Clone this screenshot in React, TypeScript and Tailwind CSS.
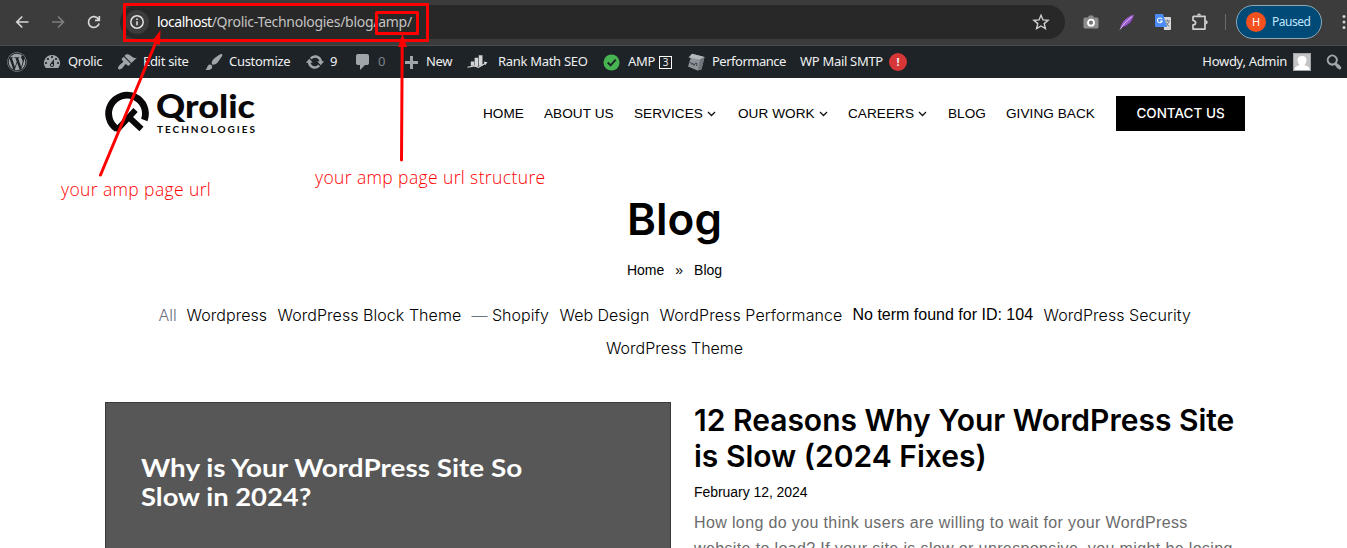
import type { ReactNode } from "react";
import { FaWordpress } from "react-icons/fa";

const dash: Record<string, string> = {
  dashboard:
    "M3.76 16h12.48A7.998 7.998 0 0 0 10 3a7.998 7.998 0 0 0-6.24 13zM10 4c.55 0 1 .45 1 1s-.45 1-1 1-1-.45-1-1 .45-1 1-1zM6 6c.55 0 1 .45 1 1s-.45 1-1 1-1-.45-1-1 .45-1 1-1zm8 0c.55 0 1 .45 1 1s-.45 1-1 1-1-.45-1-1 .45-1 1-1zm-5.37 5.55L12 7v6c0 1.1-.9 2-2 2s-2-.9-2-2c0-.57.24-1.08.63-1.45zM4 10c.55 0 1 .45 1 1s-.45 1-1 1-1-.45-1-1 .45-1 1-1zm12 0c.55 0 1 .45 1 1s-.45 1-1 1-1-.45-1-1 .45-1 1-1zm-5 3c0-.55-.45-1-1-1s-1 .45-1 1 .45 1 1 1 1-.45 1-1z",
  brush:
    "M14.48 11.06L7.41 3.99l1.5-1.5c.5-.56 2.3-.47 3.51.32 1.21.8 1.43 1.28 2.91 2.1 1.18.64 2.45 1.26 4.45.85zm-.71.71L6.7 4.7 4.93 6.47c-.39.39-.39 1.02 0 1.41l1.06 1.06c.39.39.39 1.03 0 1.42-.6.6-1.43 1.11-2.21 1.69-.35.26-.7.53-1.01.84C1.43 14.23.4 16.08 1.4 17.07c.99 1 2.84-.03 4.18-1.36.31-.31.58-.66.85-1.02.57-.78 1.08-1.61 1.69-2.21.39-.39 1.02-.39 1.41 0l1.06 1.06c.39.39 1.02.39 1.41 0z",
  customizer:
    "M18.33 3.57s.27-.8-.31-1.36c-.53-.52-1.22-.24-1.22-.24-.61.3-5.76 3.47-7.67 5.57-.86.96-2.06 3.79-1.09 4.82.92.98 3.96-.17 4.79-1 2.06-2.06 5.21-7.17 5.5-7.79zM1.4 17.65c2.37-1.56 1.46-3.41 3.23-4.64.93-.65 2.22-.62 3.08.29.63.67.8 2.57-.16 3.46-1.57 1.45-4 1.55-6.15.89z",
  update:
    "M10.2 3.28c3.53 0 6.43 2.61 6.92 6h2.08l-3.5 4-3.5-4h2.32c-.45-1.97-2.21-3.45-4.32-3.45-1.45 0-2.73.71-3.54 1.78L4.95 5.66C6.23 4.2 8.11 3.28 10.2 3.28zm-.4 13.44c-3.52 0-6.43-2.61-6.92-6H.8l3.5-4c1.17 1.33 2.33 2.67 3.5 4H5.48c.45 1.97 2.21 3.45 4.32 3.45 1.45 0 2.73-.71 3.54-1.78l1.71 1.95c-1.28 1.46-3.15 2.38-5.25 2.38z",
  comments:
    "M5 2h9q.82 0 1.41.59T16 4v7q0 .82-.59 1.41T14 13h-2l-5 5v-5H5q-.82 0-1.41-.59T3 11V4q0-.82.59-1.41T5 2z",
  plus: "M17 7v3h-5v5H9v-5H4V7h5V2h3v5h5z",
  search:
    "M12.14 4.18a5.504 5.504 0 0 1 .72 6.89c.12.1.22.21.36.31.2.16.47.36.81.59.34.24.56.39.66.47.42.31.73.57.94.78.32.32.6.65.84 1 .25.35.44.69.59 1.04.14.35.21.68.18 1-.02.32-.14.59-.36.81s-.49.34-.81.36c-.31.02-.65-.04-.99-.19-.35-.14-.7-.34-1.04-.59-.35-.24-.68-.52-1-.84-.21-.21-.47-.52-.77-.93-.1-.13-.25-.35-.47-.66-.22-.32-.4-.57-.56-.78-.16-.2-.29-.35-.44-.5a5.503 5.503 0 0 1-6.44-.98c-2.14-2.15-2.14-5.64 0-7.78a5.498 5.498 0 0 1 7.78 0zm-1.41 6.36a3.513 3.513 0 0 0 0-4.95 3.495 3.495 0 0 0-4.95 0 3.495 3.495 0 0 0 0 4.95c1.36 1.37 3.58 1.37 4.95 0z",
};

function Dash({ name }: { name: string }) {
  return (
    <svg viewBox="0 0 20 20" className="h-5 w-5 shrink-0 text-[#a0a5aa]" fill="currentColor">
      <path d={dash[name]} />
    </svg>
  );
}

function Slot({ w, children }: { w: string; children: ReactNode }) {
  return <div className={`flex h-full shrink-0 items-center whitespace-nowrap ${w}`}>{children}</div>;
}

function BrowserBar() {
  return (
    <div className="flex h-[46px] items-start border-b border-[#4b4b4b] bg-[#3c3c3c] font-['Noto_Sans','Open_Sans',sans-serif]">
      <div className="flex h-11 w-[120px] shrink-0 items-center pl-[15px]">
        <svg viewBox="0 0 90 20" className="h-5 w-[90px]" fill="none" strokeWidth="1.7">
          <path d="M13.5 10H2M7.3 4.5 1.8 10l5.5 5.5" stroke="#d6d6d6" />
          <path d="M37 10h11.500M43 4.500 48.500 10 43 15.500" stroke="#7d7d7d" />
          <path d="M83.500 7.200A5.400 5.400 0 1 0 84.100 11.500M84.300 4v4.300H80" stroke="#d6d6d6" />
        </svg>
      </div>
      <div className="mt-[5px] flex h-[34px] w-[945px] shrink-0 items-center rounded-full bg-[#282828]">
        <div className="ml-[5px] flex h-6 w-6 items-center justify-center rounded-full bg-[#3c3c3c]">
          <svg viewBox="0 0 16 16" className="h-4 w-4" fill="none" stroke="#e3e3e3" strokeWidth="1.5">
            <circle cx="8" cy="8" r="6.200" />
            <path d="M8 7.200v4M8 4.500V6" />
          </svg>
        </div>
        <div className="ml-2 w-[860px] pb-px text-[14px] tracking-[-0.28px] text-[#c3c3c3]">
          <span className="tracking-[-0.5px] text-white">localhost</span>/Qrolic-Technologies/blog/amp/
        </div>
        <svg viewBox="0 0 18 18" className="ml-[15px] h-[18px] w-[18px]" fill="none" stroke="#d0d0d0" strokeWidth="1.400">
          <path d="m9 2.200 2 4.700 5.100.4-3.900 3.300 1.200 5L9 13l-4.400 2.600 1.200-5L1.900 7.300 7 6.900z" />
        </svg>
      </div>
      <div className="flex h-11 flex-1 items-center">
        <svg viewBox="0 0 16 14" className="ml-[18px] h-[14px] w-4 shrink-0">
          <path d="M2 2.500h3L6 .5h4l1 2h3q1.500 0 1.500 1.500v8q0 1.500-1.500 1.500H2Q.5 13.500.5 12V4Q.5 2.500 2 2.500z" fill="#8d8d8d" />
          <circle cx="8" cy="7.700" r="3" fill="#777" stroke="#fff" strokeWidth="1.800" />
        </svg>
        <svg viewBox="0 0 16 16" className="ml-5 h-4 w-4 shrink-0">
          <path d="M1.500 15C1 10 6 3.500 14.800.5 14.500 6.500 9.500 12 3 13.200z" fill="#9a5cc9" />
          <path d="M1 15.500Q5 8.500 13 2.500" stroke="#e3c9f5" strokeWidth=".9" fill="none" />
          <path d="M4 13.200Q11 11 14 4" stroke="#5f2c83" strokeWidth=".9" fill="none" />
        </svg>
        <svg viewBox="0 0 16 16" className="ml-5 h-4 w-4 shrink-0">
          <path d="M8 3h7q1 0 1 1v11q0 1-1 1H9z" fill="#d8d8d8" />
          <path d="M10 7h5M12.500 5.500V7M11 12.500l3-5M11 8.500l3 4" stroke="#6f7c89" strokeWidth="1" fill="none" />
          <path d="M1 0h7l4 13H1q-1 0-1-1V1q0-1 1-1z" fill="#4b8bf5" />
          <path d="M7 5.200A2.400 2.400 0 1 0 7.200 7H5" stroke="#fff" strokeWidth="1.100" fill="none" />
        </svg>
        <svg viewBox="0 0 18 18" className="ml-5 h-[18px] w-[18px] shrink-0" fill="none" stroke="#d0d0d0" strokeWidth="1.700" strokeLinejoin="round">
          <path d="M2 3.300h12v4.300M14 10.800v5.300H2v-4.200q2.600-.2 2.600-2.200T2 7.500V3.300" />
          <path d="M14 7v4.500" />
          <path d="M6 2.600a2 2 0 0 1 4 0zM14.700 7.200a2 2 0 0 1 0 4z" fill="#d0d0d0" stroke="none" />
        </svg>
        <div className="ml-[16px] h-4 w-px shrink-0 bg-[#6b6b6b]" />
        <div className="ml-[10px] flex h-[34px] w-[86px] shrink-0 items-center rounded-full border border-[#8fa9b6] bg-[#004a77] pl-[9px]">
          <div className="flex h-5 w-5 items-center justify-center rounded-full bg-[#f4511e] text-[11px] text-white">H</div>
          <span className="ml-[6px] text-[12px] tracking-[-0.5px] text-[#c2e7ff]">Paused</span>
        </div>
        <svg viewBox="0 0 4 16" className="ml-5 h-4 w-1 shrink-0" fill="#d0d0d0">
          <circle cx="2" cy="2.500" r="1.500" />
          <circle cx="2" cy="8" r="1.500" />
          <circle cx="2" cy="13.500" r="1.500" />
        </svg>
      </div>
    </div>
  );
}

function AdminBar() {
  return (
    <div className="flex h-8 items-center bg-[#1d2327] pl-[7px] font-['Noto_Sans','Open_Sans',sans-serif] text-[13px] tracking-[-0.3px] text-[#f0f0f1]">
      <Slot w="w-[35px]"><FaWordpress className="h-5 w-5 text-[#a0a5aa]" /></Slot>
      <Slot w="w-[75px] gap-[6px]"><Dash name="dashboard" />Qrolic</Slot>
      <Slot w="w-[87px] gap-[6px]"><Dash name="brush" />Edit site</Slot>
      <Slot w="w-[101px] gap-[5px]"><Dash name="customizer" />Customize</Slot>
      <Slot w="w-[48px] gap-[5px]"><Dash name="update" />9</Slot>
      <Slot w="w-[48px] gap-[5px]"><Dash name="comments" /><span className="text-[#7d8287]">0</span></Slot>
      <Slot w="w-[66px] gap-[5px]"><span className="flex translate-y-[2px]"><Dash name="plus" /></span>New</Slot>
      <Slot w="w-[136px] gap-[10px]">
        <svg viewBox="0 0 22 16" className="h-4 w-[21px] shrink-0" fill="#d3d5d6">
          <path d="M4 7.500h3.500V12H4zM8 3.500h3.700v9H8zM12.300 1h3.900v11h-3.900z" />
          <path d="m.5 13.500 7.500-1.500 4 1.500 7-4" fill="none" stroke="#d3d5d6" strokeWidth="1.300" />
          <path d="m17.500 7.500 4 .8-2.500 3.200z" />
        </svg>
        Rank Math SEO
      </Slot>
      <Slot w="w-[84px]">
        <svg viewBox="0 0 18 18" className="h-[17px] w-[17px] shrink-0">
          <circle cx="9" cy="9" r="8.500" fill="#46b450" />
          <path d="m5 9 3 3 5.500-6" fill="none" stroke="#1d2327" strokeWidth="2" />
        </svg>
        <span className="ml-2">AMP</span>
        <span className="ml-1 flex h-[13px] w-[13px] items-center justify-center border border-white text-[10px] tracking-normal">3</span>
      </Slot>
      <Slot w="w-[112px] gap-[7px]">
        <svg viewBox="0 0 18 18" className="h-[18px] w-[18px] shrink-0">
          <path d="M5 .8 17.500 4l-3 12.500-4 1L1 13.500z" fill="#8e9499" />
          <path d="M5 .8 17.500 4l-4.500 2.500L1.500 4.500z" fill="#b3b7ba" />
          <path d="M17.500 4 13 6.500 11 17.500l3.500-1.500z" fill="#6f767b" />
          <path d="m3.500 9 1.200 2.500 1-1.500 1.300 2.500L8.500 10l1.500.5-.5 2.500" fill="none" stroke="#3f464c" />
        </svg>
        <span className="tracking-[-0.5px]">Performance</span>
      </Slot>
      <Slot w="w-[110px]">
        <span className="w-[90px] pl-px">WP Mail SMTP</span>
        <span className="flex h-[18px] w-[18px] items-center justify-center rounded-full bg-[#d63638] text-[11px] font-bold">!</span>
      </Slot>
      <div className="flex flex-1 items-center justify-end">
        Howdy, Admin
        <svg viewBox="0 0 18 18" className="ml-[6px] h-[18px] w-[18px]">
          <path d="M0 0h18v18H0z" fill="#c4c4c4" />
          <path d="M1.500 17.500V15q1-1.500 5-3Q4.500 9.500 4.500 7q0-4 4.500-4t4.500 4q0 2.500-2 5 4 1.500 5 3v2.500z" fill="#fff" />
          <path d="M.5.5h17v17H.5z" fill="none" stroke="#a0a5aa" />
        </svg>
        <span className="ml-[13px] mr-[3px] flex"><Dash name="search" /></span>
      </div>
    </div>
  );
}

function Logo() {
  return (
    <svg viewBox="0 0 152 44" className="h-11 w-[152px] overflow-visible" fill="none">
      <path d="M12 38A18.400 18.400 0 1 1 39.300 29" stroke="#0a0808" strokeWidth="6.800" />
      <path d="M30.500 19 11 40M22 24.500 36.500 38" stroke="#0a0808" strokeWidth="6" />
      <text x="51" y="27" fontFamily="Lato, sans-serif" fontWeight="900" fontSize="33" textLength="99" lengthAdjust="spacingAndGlyphs" fill="#0a0808">Qrolic</text>
      <text x="52" y="41.500" fontFamily="Lato, sans-serif" fontWeight="700" fontSize="10" textLength="98" fill="#0a0808">TECHNOLOGIES</text>
    </svg>
  );
}

function Chevron() {
  return (
    <svg viewBox="0 0 9 6" className="ml-1 h-[6px] w-[9px]" fill="none" stroke="#111" strokeWidth="1.300">
      <path d="m1 1 3.500 3.500L8 1" />
    </svg>
  );
}

function SiteHeader() {
  return (
    <header className="flex h-[70px] items-center pl-[105px] font-['Liberation_Sans',sans-serif] text-[14px] text-black">
      <div className="w-[378px]"><Logo /></div>
      <div className="flex h-full items-center pt-[2px] text-[13.6px] tracking-[0.05px]">
        <Slot w="w-[61px]">HOME</Slot>
        <Slot w="w-[90px]">ABOUT US</Slot>
        <Slot w="w-[104px]">SERVICES<Chevron /></Slot>
        <Slot w="w-[110px]">OUR WORK<Chevron /></Slot>
        <Slot w="w-[100px]">CAREERS<Chevron /></Slot>
        <Slot w="w-[58px]">BLOG</Slot>
        <Slot w="w-[110px]">GIVING BACK</Slot>
      </div>
      <div className="flex h-[35px] w-[129px] items-center justify-center bg-black font-['Inter',sans-serif] text-[13.5px] font-medium text-white">CONTACT US</div>
    </header>
  );
}

function Annotations() {
  return (
    <>
      <svg viewBox="0 0 560 210" className="pointer-events-none absolute left-0 top-0 h-[210px] w-[560px]" fill="none" stroke="#ff0000">
        <path d="M124.500 4.500h303v36h-303z" strokeWidth="3" />
        <path d="M376.500 12.500h41v21h-41z" strokeWidth="3" strokeLinejoin="round" />
        <path d="M100.500 175 156 42M401.500 160l.7-115" strokeWidth="3" strokeLinecap="round" />
        <path d="m160.500 30-.5 15-8-3.500zM402.500 34l4.500 13h-9z" fill="#ff0000" stroke="none" />
      </svg>
      <div className="absolute left-[61px] top-[177px] whitespace-nowrap font-['Open_Sans',sans-serif] text-[17.5px] font-[350] leading-6 tracking-[0.38px] text-[#f00]">your amp page url</div>
      <div className="absolute left-[315px] top-[165px] whitespace-nowrap font-['Open_Sans',sans-serif] text-[17.5px] font-[350] leading-6 tracking-[0.38px] text-[#f00]">your amp page url structure</div>
    </>
  );
}

export default function App() {
  return (
    <div className="relative h-[548px] w-[1347px] overflow-hidden bg-white font-['Inter',sans-serif] text-black">
      <BrowserBar />
      <AdminBar />
      <SiteHeader />
      <main>
        <section className="flex h-[254px] flex-col items-center pt-[44px]">
          <h1 className="pl-[2px] text-[44px] font-semibold leading-[54px]">Blog</h1>
          <div className="mt-[15px] flex gap-[11px] pl-[2px] font-['Liberation_Sans',sans-serif] text-[14px] leading-[18px]"><span>Home</span><span>»</span><span>Blog</span></div>
          <div className="mt-[19px] flex h-[33px] w-[1030px] items-center whitespace-nowrap text-[16px] font-light">
            <Slot w="w-[28px]"><span className="text-[#6b7280]">All</span></Slot>
            <Slot w="w-[91px] tracking-[0.05px]">Wordpress</Slot>
            <Slot w="w-[194px] tracking-[0.05px]">WordPress Block Theme</Slot>
            <Slot w="w-[88px]"><span className="text-[#6b7280]">—</span>&nbsp;Shopify</Slot>
            <Slot w="w-[100px]">Web Design</Slot>
            <Slot w="w-[193px] tracking-[0.08px]">WordPress Performance</Slot>
            <Slot w="w-[191px]"><span className="font-['Liberation_Sans',sans-serif] text-[16px] font-normal">No term found for ID: 104</span></Slot>
            <Slot w="w-[145px] tracking-[0.05px]">WordPress Security</Slot>
          </div>
          <div className="flex h-[33px] items-center pl-[2px] text-[16px] font-light">WordPress Theme</div>
        </section>
        <article className="flex h-[146px] pl-[105px]">
          <div className="h-[500px] w-[566px] shrink-0 border border-[#3a3a3a] bg-[#575757] pl-[35px] pt-[50px] font-['Lato',sans-serif] text-[25px] font-bold leading-[29px] text-white">
            <div className="w-fit origin-left scale-x-[1.115] whitespace-nowrap">Why is Your WordPress Site So</div>
            <div className="w-fit origin-left scale-x-[1.095]">Slow in 2024?</div>
          </div>
          <div className="ml-[23px] whitespace-nowrap">
            <h2 className="text-[30px] font-semibold leading-9"><div>12 Reasons Why Your WordPress Site</div><div>is Slow (2024 Fixes)</div></h2>
            <div className="mt-2 font-['Liberation_Sans',sans-serif] text-[14px] leading-5 tracking-[-0.05px]">February 12, 2024</div>
            <div className="mt-2 font-['Liberation_Sans',sans-serif] text-[16px] leading-[26px] tracking-[0.37px] text-[#6b6b6b]"><div>How long do you think users are willing to wait for your WordPress</div><div>website to load? If your site is slow or unresponsive, you might be losing</div></div>
          </div>
        </article>
      </main>
      <Annotations />
    </div>
  );
}
